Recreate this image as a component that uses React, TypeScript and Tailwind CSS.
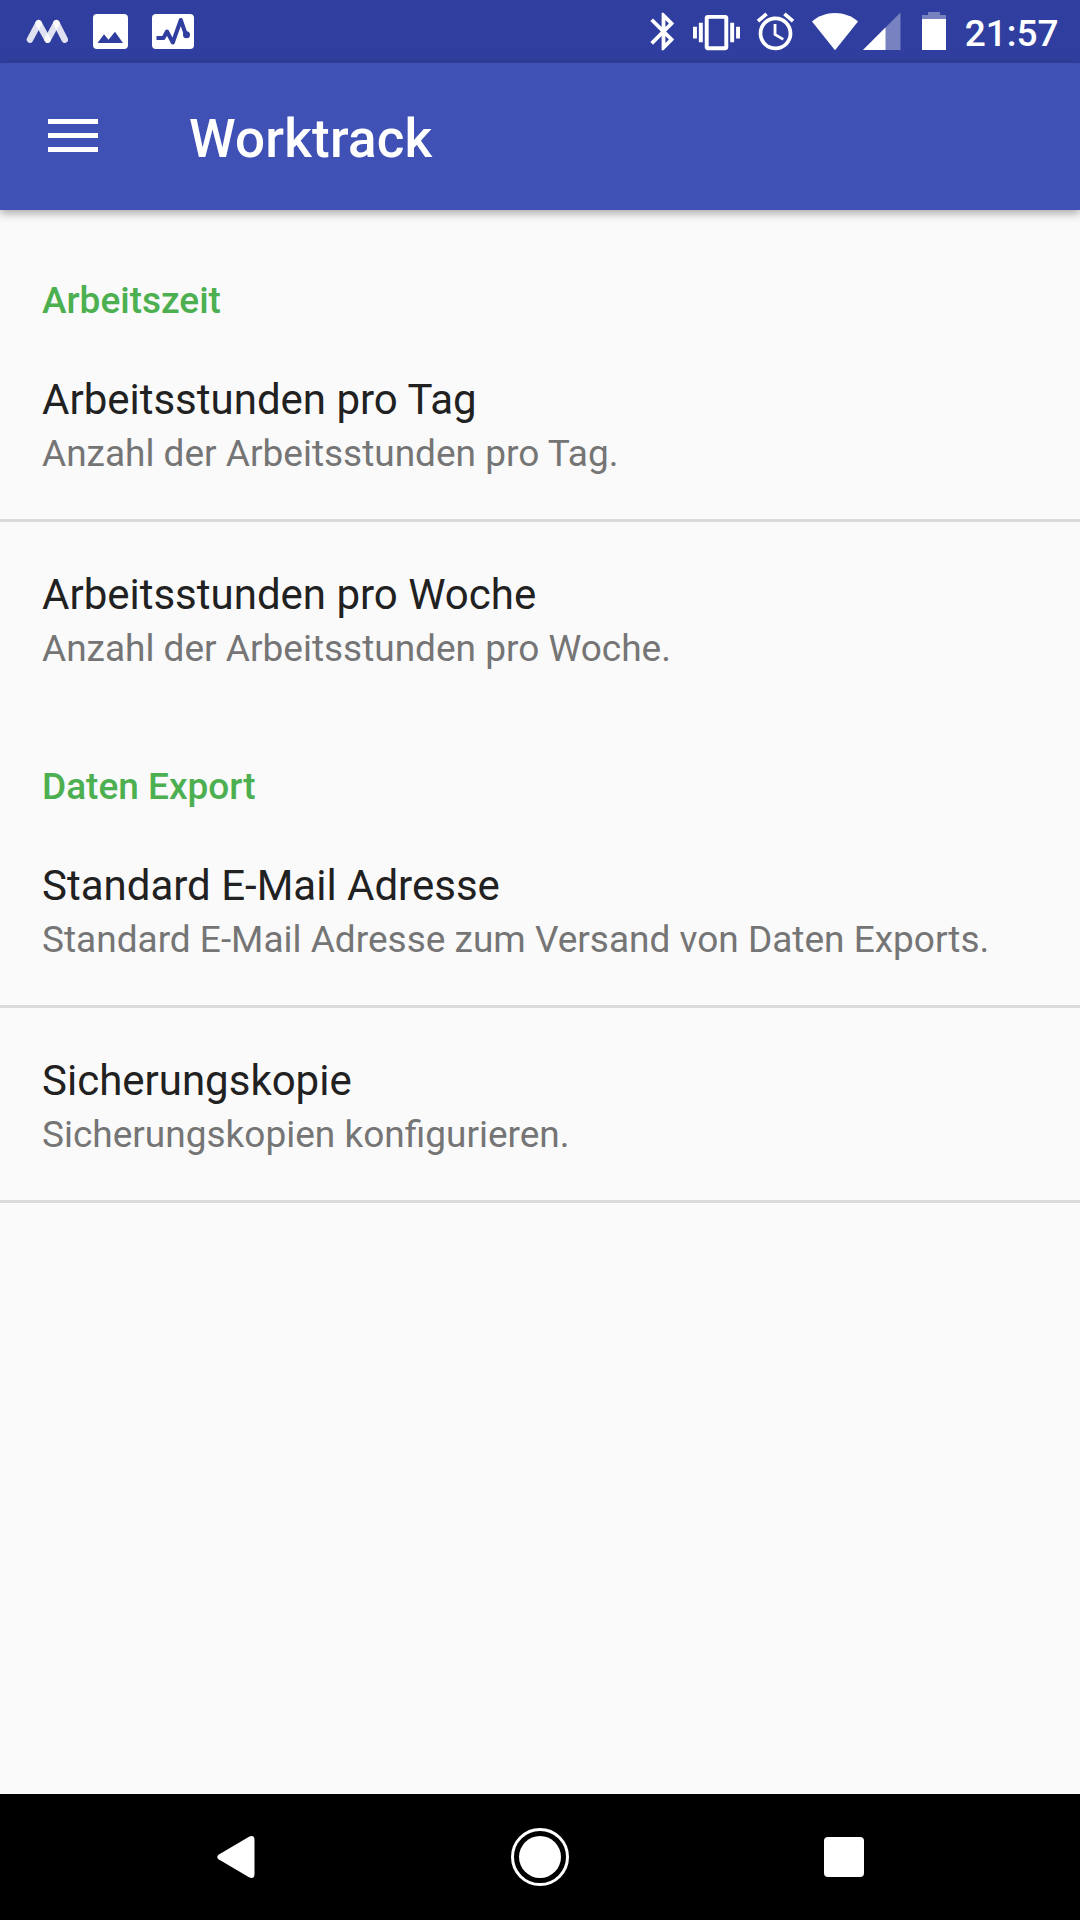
import type { ReactNode } from 'react';

interface Preference {
  title: string;
  summary: string;
}

interface PreferenceGroup {
  category: string;
  items: Preference[];
}

const GROUPS: PreferenceGroup[] = [
  {
    category: 'Arbeitszeit',
    items: [
      { title: 'Arbeitsstunden pro Tag', summary: 'Anzahl der Arbeitsstunden pro Tag.' },
      { title: 'Arbeitsstunden pro Woche', summary: 'Anzahl der Arbeitsstunden pro Woche.' },
    ],
  },
  {
    category: 'Daten Export',
    items: [
      {
        title: 'Standard E-Mail Adresse',
        summary: 'Standard E-Mail Adresse zum Versand von Daten Exports.',
      },
      { title: 'Sicherungskopie', summary: 'Sicherungskopien konfigurieren.' },
    ],
  },
];

interface IconProps {
  viewBox: string;
  className: string;
  children: ReactNode;
}

function Icon({ viewBox, className, children }: IconProps) {
  return (
    <svg viewBox={viewBox} className={`shrink-0 fill-current ${className}`} aria-hidden="true">
      {children}
    </svg>
  );
}

function StatusBar() {
  return (
    <div className="flex h-[63px] items-start justify-between bg-[#303f9f] text-white">
      {/* Notifications */}
      <div className="flex">
        <Icon viewBox="0 0 42 63" className="ml-[26px] h-[63px] w-[42px]">
          <g fill="none" stroke="#fff" strokeWidth="6.6" strokeLinecap="round">
            <path d="M4 39.5 12.6 23.3M21.6 39.5 30.4 23.3" opacity="0.85" />
            <path d="M12.6 23.3 21.6 39.5M30.4 23.3 38.7 39.5" opacity="0.85" />
          </g>
        </Icon>
        <Icon viewBox="0 0 35 63" className="ml-[25px] h-[63px] w-[35px]">
          <path
            fillRule="evenodd"
            d="M4 14H31A4 4 0 0 1 35 18V45A4 4 0 0 1 31 49H4A4 4 0 0 1 0 45V18A4 4 0 0 1 4 14ZM4.5 43H30L22 31.7 15.5 39.8 11 34.3Z"
          />
        </Icon>
        <Icon viewBox="0 0 42 63" className="ml-6 h-[63px] w-[42px]">
          <rect y="14" width="42" height="35" rx="4" />
          <path
            d="M4.5 38H11.5L15 31.5 20.8 42.5 28.8 20 34 35"
            fill="none"
            stroke="#303f9f"
            strokeWidth="4"
            strokeLinejoin="round"
          />
          <circle cx="34.5" cy="34.8" r="3.5" fill="#303f9f" />
        </Icon>
      </div>

      {/* System icons */}
      <div className="flex">
        <Icon viewBox="0 0 24 24" className="mt-[9px] h-[45px] w-[45px]">
          <path d="M17.71 7.71 12 2h-1v7.59L6.41 5 5 6.41 10.59 12 5 17.59 6.41 19 11 14.41V22h1l5.71-5.71-4.3-4.29 4.3-4.29zM13 5.83l1.88 1.88L13 9.59V5.83zm1.88 10.46L13 18.17v-3.76l1.88 1.88z" />
        </Icon>
        <Icon viewBox="0 0 24 24" className="ml-[7px] mt-[8.5px] h-[47px] w-[47px]">
          <path d="M0 15h2V9H0v6zm3 2h2V7H3v10zm19-8v6h2V9h-2zm-3 8h2V7h-2v10zM16.5 3h-9C6.67 3 6 3.67 6 4.5v15c0 .83.67 1.5 1.5 1.5h9c.83 0 1.5-.67 1.5-1.5v-15c0-.83-.67-1.5-1.5-1.5zM16 19H8V5h8v14z" />
        </Icon>
        <Icon viewBox="0 0 24 24" className="ml-[13px] mt-[9px] h-[45px] w-[45px]">
          <path d="M22 5.72l-4.6-3.86-1.29 1.53 4.6 3.86L22 5.72zM7.88 3.39 6.6 1.86 2 5.71l1.29 1.53 4.59-3.85zM12.5 8H11v6l4.75 2.85.75-1.23-4-2.37V8zM12 4c-4.97 0-9 4.03-9 9s4.02 9 9 9a9 9 0 0 0 0-18zm0 16c-3.87 0-7-3.13-7-7s3.13-7 7-7 7 3.13 7 7-3.13 7-7 7z" />
        </Icon>
        <Icon viewBox="0 0 46 63" className="ml-[14px] h-[63px] w-[46px]">
          <path d="M23 50.2 0 21.4C6.5 16 14.5 13 23 13S39.5 16 46 21.4Z" />
        </Icon>
        <Icon viewBox="0 0 38 63" className="ml-[4.5px] h-[63px] w-[38px]">
          <path d="M0 50H37.5V12.5Z" opacity="0.35" />
          <path d="M0 50H22.5V27.5Z" />
        </Icon>
        <Icon viewBox="0 0 24 63" className="ml-[21.5px] h-[63px] w-[24px]">
          <path d="M0 19V15H6V12H18V15H24V19Z" opacity="0.35" />
          <path d="M0 19H24V50H0Z" />
        </Icon>
        <span className="ml-[18.5px] mr-[21.5px] mt-[12px] text-[37px] leading-[43px] font-medium">21:57</span>
      </div>
    </div>
  );
}

function Toolbar() {
  return (
    <header className="relative flex h-[147px] items-center bg-[#3f51b5] text-white shadow-[0_3px_9px_rgba(0,0,0,0.35)]">
      <button className="ml-12 -mt-0.5 flex flex-col gap-[9px]" aria-label="Menü">
        <span className="h-[5px] w-[50px] bg-white" />
        <span className="h-[5px] w-[50px] bg-white" />
        <span className="h-[5px] w-[50px] bg-white" />
      </button>
      <h1 className="ml-[91px] mt-1 text-[53px] leading-[62px] font-medium tracking-[0.2px]">Worktrack</h1>
    </header>
  );
}

function PreferenceRow({ title, summary }: Preference) {
  return (
    <li className="box-content h-[144px] px-[42px] pt-[48px]">
      <div className="text-[42px] leading-[50px] text-[#212121]">{title}</div>
      <div className="mt-1 text-[37px] leading-[50px] text-[#757575]">{summary}</div>
    </li>
  );
}

function NavigationBar() {
  return (
    <nav className="flex h-[126px] items-center bg-black pl-[217px] text-white">
      <Icon viewBox="0 0 38 42" className="h-[42px] w-[38px]">
        <path d="M1.5 18.7 32 .7Q37.5-1.5 37.5 4V38Q37.5 43.5 32 41.3L1.5 23.3Q-1 21 1.5 18.7Z" />
      </Icon>
      <Icon viewBox="0 0 58 58" className="ml-[256px] h-[58px] w-[58px]">
        <circle cx="29" cy="29" r="27.5" fill="none" stroke="#fff" strokeWidth="3" />
        <circle cx="29" cy="29" r="21" />
      </Icon>
      <span className="ml-[255px] h-10 w-10 rounded-[4px] bg-white" />
    </nav>
  );
}

export default function App() {
  return (
    <div className="flex h-[1920px] w-[1080px] flex-col overflow-hidden bg-[#fafafa] font-['Roboto',sans-serif]">
      <StatusBar />
      <Toolbar />
      <main className="flex flex-1 flex-col gap-[3px] pt-[21px]">
        {GROUPS.map((group) => (
          <section key={group.category} className="last:border-b-3 last:border-[#dadada]">
            <h2 className="h-[96px] px-[42px] pt-[45px] text-[37px] leading-[50px] font-medium text-[#4caf50]">
              {group.category}
            </h2>
            <ul className="divide-y-3 divide-[#dadada]">
              {group.items.map((item) => (
                <PreferenceRow key={item.title} {...item} />
              ))}
            </ul>
          </section>
        ))}
      </main>
      <NavigationBar />
    </div>
  );
}
